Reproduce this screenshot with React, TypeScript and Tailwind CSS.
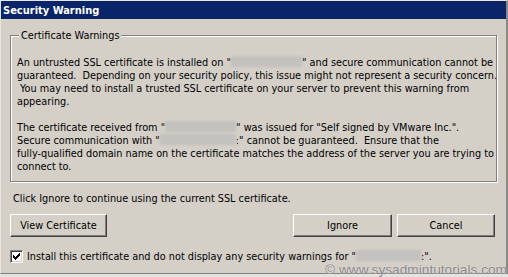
import React from "react";

const Blur = ({ w }: { w: number }) => (
  <span
    className="inline-block h-[11px] align-[-1px] bg-[#c3c2bf] blur-[1.2px]"
    style={{ width: w }}
  />
);

const Btn = ({ children, w }: { children: React.ReactNode; w: number }) => (
  <div
    className="h-[23px] flex items-center justify-center bg-[#d4d0c8] border-t border-l border-t-white border-l-white border-r border-b border-r-[#404040] border-b-[#404040] shadow-[inset_-1px_-1px_0_#808080]"
    style={{ width: w }}
  >
    {children}
  </div>
);

export default function App() {
  const font = "font-['DejaVu_Sans',sans-serif] [font-stretch:condensed]";
  return (
    <div className={`w-[508px] h-[277px] bg-[#e4e3e0] relative overflow-hidden ${font} text-[10.8px] leading-[13px] text-black`}>
      <div className="w-[508px] h-[274px] bg-[#d4d0c8] border-t border-l border-[#e8e6e0] border-r-2 border-b border-r-[#8a8884] border-b-[#808080] flex flex-col">
        <div className="h-[18px] bg-[#0a246a] text-white font-bold text-[11px] pl-[2px] flex items-center">
          Security Warning
        </div>
        <div className="flex flex-col px-[9px]">
          <div className="relative mt-[16px] h-[147px] border border-[#808080] shadow-[1px_1px_0_#fff,inset_1px_1px_0_#fff] pt-[20px] pl-[6px]">
            <div className="absolute left-[8px] top-[-7px] px-[2px] bg-[#d4d0c8] leading-[13px]">
              Certificate Warnings
            </div>
            <div className="whitespace-pre">
              <div>
                An untrusted SSL certificate is installed on "<Blur w={71} />" and secure communication cannot be
              </div>
              <div>guaranteed.  Depending on your security policy, this issue might not represent a security concern.</div>
              <div> You may need to install a trusted SSL certificate on your server to prevent this warning from</div>
              <div>appearing.</div>
              <div>&nbsp;</div>
              <div>
                The certificate received from "<Blur w={71} />" was issued for "Self signed by VMware Inc.".
              </div>
              <div>
                Secure communication with "<Blur w={76} />:" cannot be guaranteed.  Ensure that the
              </div>
              <div>fully-qualified domain name on the certificate matches the address of the server you are trying to</div>
              <div>connect to.</div>
            </div>
          </div>
          <div className="mt-[10px] pl-[3px] whitespace-pre">Click Ignore to continue using the current SSL certificate.</div>
          <div className="mt-[9px] flex items-center">
            <Btn w={97}>View Certificate</Btn>
            <div className="ml-[186px] flex gap-[5px]">
              <Btn w={99}>Ignore</Btn>
              <Btn w={98}>Cancel</Btn>
            </div>
          </div>
          <div className="mt-[13px] flex items-center">
            <div className="w-[13px] h-[13px] bg-white border-t border-l border-t-[#808080] border-l-[#808080] border-r border-b border-r-white border-b-white shadow-[inset_1px_1px_0_#404040,inset_-1px_-1px_0_#d4d0c8] flex items-center justify-center">
              <svg width="7" height="7" viewBox="0 0 7 7">
                <path d="M0 2h1v1h1v1h1v-1h1v-1h1v-1h1v-1h1v3h-1v1h-1v1h-1v1h-1v1h-1v-1h-1v-1h-1z" fill="#000" />
              </svg>
            </div>
            <div className="ml-[4px] whitespace-pre">
              Install this certificate and do not display any security warnings for "<Blur w={65} />:".
            </div>
          </div>
        </div>
      </div>
      <div className="absolute right-[1px] bottom-0 font-['Liberation_Sans',sans-serif] text-[13.7px] leading-[14px] text-[#8a8787] [text-shadow:0_0_1px_#f0f0f0]">
        © www.sysadmintutorials.com
      </div>
    </div>
  );
}
